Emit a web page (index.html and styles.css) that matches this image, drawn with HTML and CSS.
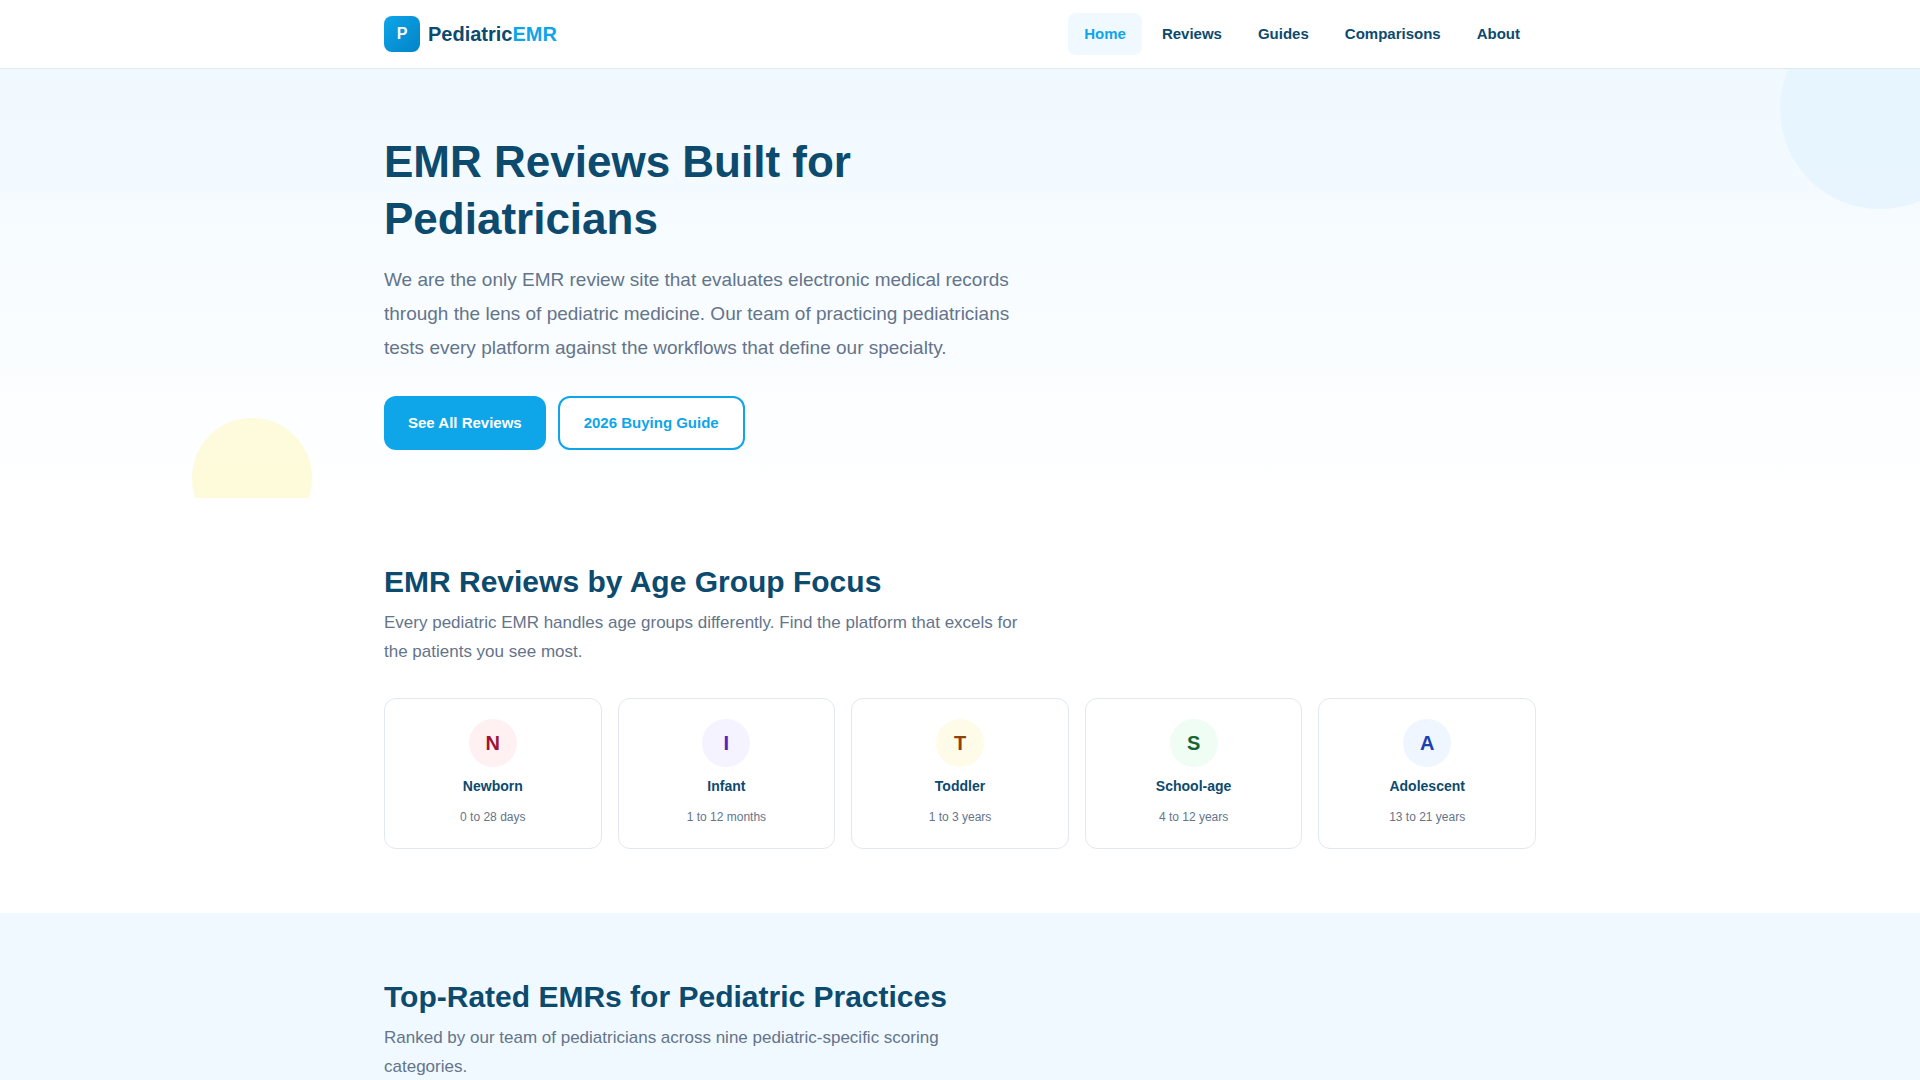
FILE: index.html
```html
<!DOCTYPE html>
<html lang="en">
  <head>
    <meta charset="UTF-8">
    <meta name="viewport" content="width=device-width, initial-scale=1.0">
    <title>PediatricEMR</title>
    <link rel="stylesheet" href="styles.css">
  </head>
  <body>
    <header class="site-header">
      <div class="container header-inner">
        <a href="#" class="logo">
          <span class="logo-icon">P</span>
          <span class="logo-text">Pediatric<span>EMR</span></span>
        </a>
        <nav class="main-nav">
          <a href="#" class="active">Home</a>
          <a href="#reviews">Reviews</a>
          <a href="#guides">Guides</a>
          <a href="#comparisons">Comparisons</a>
          <a href="#about">About</a>
        </nav>
      </div>
    </header>

    <section class="hero">
      <div class="container">
        <div class="hero-content">
          <h1>EMR Reviews Built for Pediatricians</h1>
          <p>
            We are the only EMR review site that evaluates electronic medical
            records through the lens of pediatric medicine. Our team of
            practicing pediatricians tests every platform against the workflows
            that define our specialty.
          </p>
          <div class="hero-buttons">
            <a href="#reviews" class="btn btn-primary">See All Reviews</a>
            <a href="#guides" class="btn btn-outline">2026 Buying Guide</a>
          </div>
        </div>
      </div>
    </section>

    <section class="section">
      <div class="container">
        <h2>EMR Reviews by Age Group Focus</h2>
        <p class="section-desc">
          Every pediatric EMR handles age groups differently. Find the platform
          that excels for the patients you see most.
        </p>
        <div class="age-grid">
          <div class="age-card">
            <div class="age-icon newborn">N</div>
            <h3>Newborn</h3>
            <p>0 to 28 days</p>
          </div>
          <div class="age-card">
            <div class="age-icon infant">I</div>
            <h3>Infant</h3>
            <p>1 to 12 months</p>
          </div>
          <div class="age-card">
            <div class="age-icon toddler">T</div>
            <h3>Toddler</h3>
            <p>1 to 3 years</p>
          </div>
          <div class="age-card">
            <div class="age-icon school">S</div>
            <h3>School-age</h3>
            <p>4 to 12 years</p>
          </div>
          <div class="age-card">
            <div class="age-icon adolescent">A</div>
            <h3>Adolescent</h3>
            <p>13 to 21 years</p>
          </div>
        </div>
      </div>
    </section>

    <section class="section section-alt" id="reviews">
      <div class="container">
        <h2>Top-Rated EMRs for Pediatric Practices</h2>
        <p class="section-desc">
          Ranked by our team of pediatricians across nine pediatric-specific
          scoring categories.
        </p>
      </div>
    </section>
  </body>
</html>
```
FILE: styles.css
```css
* {
  margin: 0;
  padding: 0;
  box-sizing: border-box;
}

body {
  font-family: "Liberation Sans", Arial, sans-serif;
  color: #0c4a6e;
  background: #fff;
}

a {
  text-decoration: none;
}

.container {
  max-width: 1200px;
  margin: 0 auto;
  padding: 0 24px;
}

/* Header */
.site-header {
  border-bottom: 1px solid #e2e8f0;
  background: #fff;
}

.header-inner {
  display: flex;
  align-items: center;
  justify-content: space-between;
  min-height: 68px;
}

.logo {
  display: flex;
  align-items: center;
  gap: 8px;
  font-size: 20px;
  font-weight: 700;
  color: #0c4a6e;
}

.logo-icon {
  display: flex;
  align-items: center;
  justify-content: center;
  width: 36px;
  height: 36px;
  border-radius: 8px;
  background: linear-gradient(135deg, #0ea5e9, #0284c7);
  color: #fff;
  font-size: 16px;
}

.logo-text span {
  color: #0ea5e9;
}

.main-nav {
  display: flex;
  gap: 4px;
}

.main-nav a {
  padding: 8px 16px;
  border-radius: 8px;
  font-size: 15px;
  line-height: 26px;
  font-weight: 600;
  color: #0c4a6e;
}

.main-nav a.active {
  color: #0ea5e9;
  background: #f0f9ff;
}

/* Hero */
.hero {
  position: relative;
  overflow: hidden;
  padding: 64px 0 48px;
  background: linear-gradient(180deg, #f0f9ff 0%, #fff 100%);
}

.hero::before,
.hero::after {
  content: "";
  position: absolute;
  border-radius: 50%;
  opacity: 0.6;
}

.hero::before {
  top: -60px;
  right: -60px;
  width: 200px;
  height: 200px;
  background: #e0f2fe;
}

.hero::after {
  bottom: -40px;
  left: 10%;
  width: 120px;
  height: 120px;
  background: #fef9c3;
}

.hero-content {
  max-width: 640px;
}

.hero h1 {
  margin-bottom: 16px;
  font-size: 44px;
  line-height: 57px;
}

.hero p {
  margin-bottom: 31px;
  font-size: 19px;
  line-height: 34px;
  color: #64748b;
}

.hero-buttons {
  display: flex;
  flex-wrap: wrap;
  gap: 12px;
}

.btn {
  padding: 14px 24px;
  border-radius: 12px;
  font-size: 15px;
  line-height: 26px;
  font-weight: 600;
}

.btn-primary {
  background: #0ea5e9;
  color: #fff;
}

.btn-outline {
  padding: 12px 24px;
  border: 2px solid #0ea5e9;
  background: #fff;
  color: #0ea5e9;
}

/* Sections */
.section {
  padding: 64px 0;
}

.section-alt {
  background: #f0f9ff;
}

.section h2 {
  margin-bottom: 6px;
  font-size: 30px;
  line-height: 40px;
}

.section-desc {
  max-width: 640px;
  font-size: 17px;
  line-height: 29px;
  color: #64748b;
}

/* Age groups */
.age-grid {
  display: grid;
  grid-template-columns: repeat(5, 1fr);
  gap: 16px;
  margin-top: 32px;
}

.age-card {
  padding: 20px;
  border: 1px solid #e2e8f0;
  border-radius: 12px;
  background: #fff;
  text-align: center;
}

.age-icon {
  display: flex;
  align-items: center;
  justify-content: center;
  width: 48px;
  height: 48px;
  margin: 0 auto 8px;
  border-radius: 50%;
  font-size: 20px;
  font-weight: 700;
}

.newborn {
  background: #fff1f2;
  color: #9f1239;
}

.infant {
  background: #f5f3ff;
  color: #5b21b6;
}

.toddler {
  background: #fefce8;
  color: #92400e;
}

.school {
  background: #f0fdf4;
  color: #166534;
}

.adolescent {
  background: #eff6ff;
  color: #1e40af;
}

.age-card h3 {
  margin-bottom: 10px;
  font-size: 14px;
  line-height: 22px;
}

.age-card p {
  font-size: 12px;
  line-height: 21px;
  color: #64748b;
}
```
